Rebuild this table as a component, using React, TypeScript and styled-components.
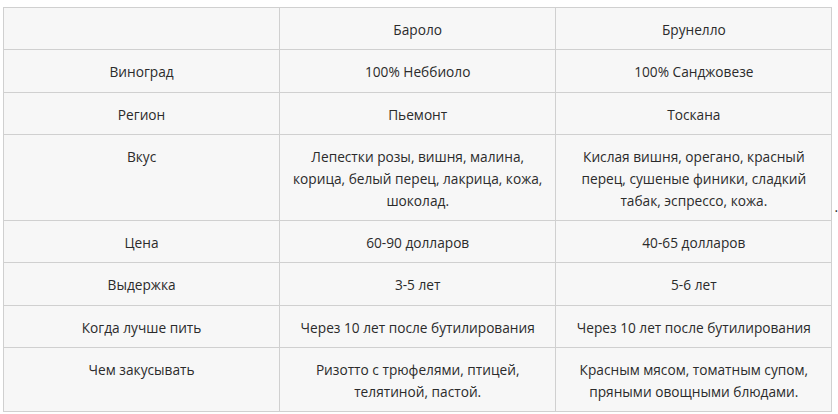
import React from 'react';
import styled, { createGlobalStyle } from 'styled-components';

const GlobalStyle = createGlobalStyle`
  body {
    margin: 0;
    background: #ffffff;
    font-family: "Open Sans", "Noto Sans", sans-serif;
    color: #2b2b2b;
  }
`;

const Page = styled.div`
  display: flex;
  align-items: center;
  padding: 7px 0 0 3px;
  width: 838px;
  box-sizing: border-box;
`;

const Table = styled.table`
  border-collapse: collapse;
  table-layout: fixed;
  width: 830px;
  background: #f7f7f7;
  font-size: 13.7px;
  line-height: 22px;
`;

const Cell = styled.td`
  border: 1px solid #d0d0d0;
  padding: 0 6px;
  text-align: center;
  vertical-align: top;
  white-space: nowrap;
`;

const Text = styled.div<{ $lines: number }>`
  box-sizing: border-box;
  padding-top: 11px;
  height: ${p => p.$lines * 22 + 19.25}px;
`;

const Tail = styled.span`
  font-size: 13.7px;
  line-height: 22px;
  margin-left: 2px;
  margin-top: -6px;
`;

type Row = { label: string; barolo: string[]; brunello: string[] };

const rows: Row[] = [
  { label: '', barolo: ['Бароло'], brunello: ['Брунелло'] },
  { label: 'Виноград', barolo: ['100% Неббиоло'], brunello: ['100% Санджовезе'] },
  { label: 'Регион', barolo: ['Пьемонт'], brunello: ['Тоскана'] },
  {
    label: 'Вкус',
    barolo: ['Лепестки розы, вишня, малина,', 'корица, белый перец, лакрица, кожа,', 'шоколад.'],
    brunello: ['Кислая вишня, орегано, красный', 'перец, сушеные финики, сладкий', 'табак, эспрессо, кожа.'],
  },
  { label: 'Цена', barolo: ['60-90 долларов'], brunello: ['40-65 долларов'] },
  { label: 'Выдержка', barolo: ['3-5 лет'], brunello: ['5-6 лет'] },
  {
    label: 'Когда лучше пить',
    barolo: ['Через 10 лет после бутилирования'],
    brunello: ['Через 10 лет после бутилирования'],
  },
  {
    label: 'Чем закусывать',
    barolo: ['Ризотто с трюфелями, птицей,', 'телятиной, пастой.'],
    brunello: ['Красным мясом, томатным супом,', 'пряными овощными блюдами.'],
  },
];

function Lines({ lines, count }: { lines: string[]; count: number }): React.JSX.Element {
  return (
    <Text $lines={count}>
      {lines.map((line, i) => (
        <React.Fragment key={i}>
          {i > 0 && <br />}
          {line}
        </React.Fragment>
      ))}
    </Text>
  );
}

export default function App(): React.JSX.Element {
  return (
    <>
      <GlobalStyle />
      <Page>
        <Table>
          <tbody>
            {rows.map((row, i) => {
              const count = Math.max(row.barolo.length, row.brunello.length);
              return (
                <tr key={i}>
                  <Cell>
                    <Lines lines={[row.label]} count={count} />
                  </Cell>
                  <Cell>
                    <Lines lines={row.barolo} count={count} />
                  </Cell>
                  <Cell>
                    <Lines lines={row.brunello} count={count} />
                  </Cell>
                </tr>
              );
            })}
          </tbody>
        </Table>
        <Tail>.</Tail>
      </Page>
    </>
  );
}
